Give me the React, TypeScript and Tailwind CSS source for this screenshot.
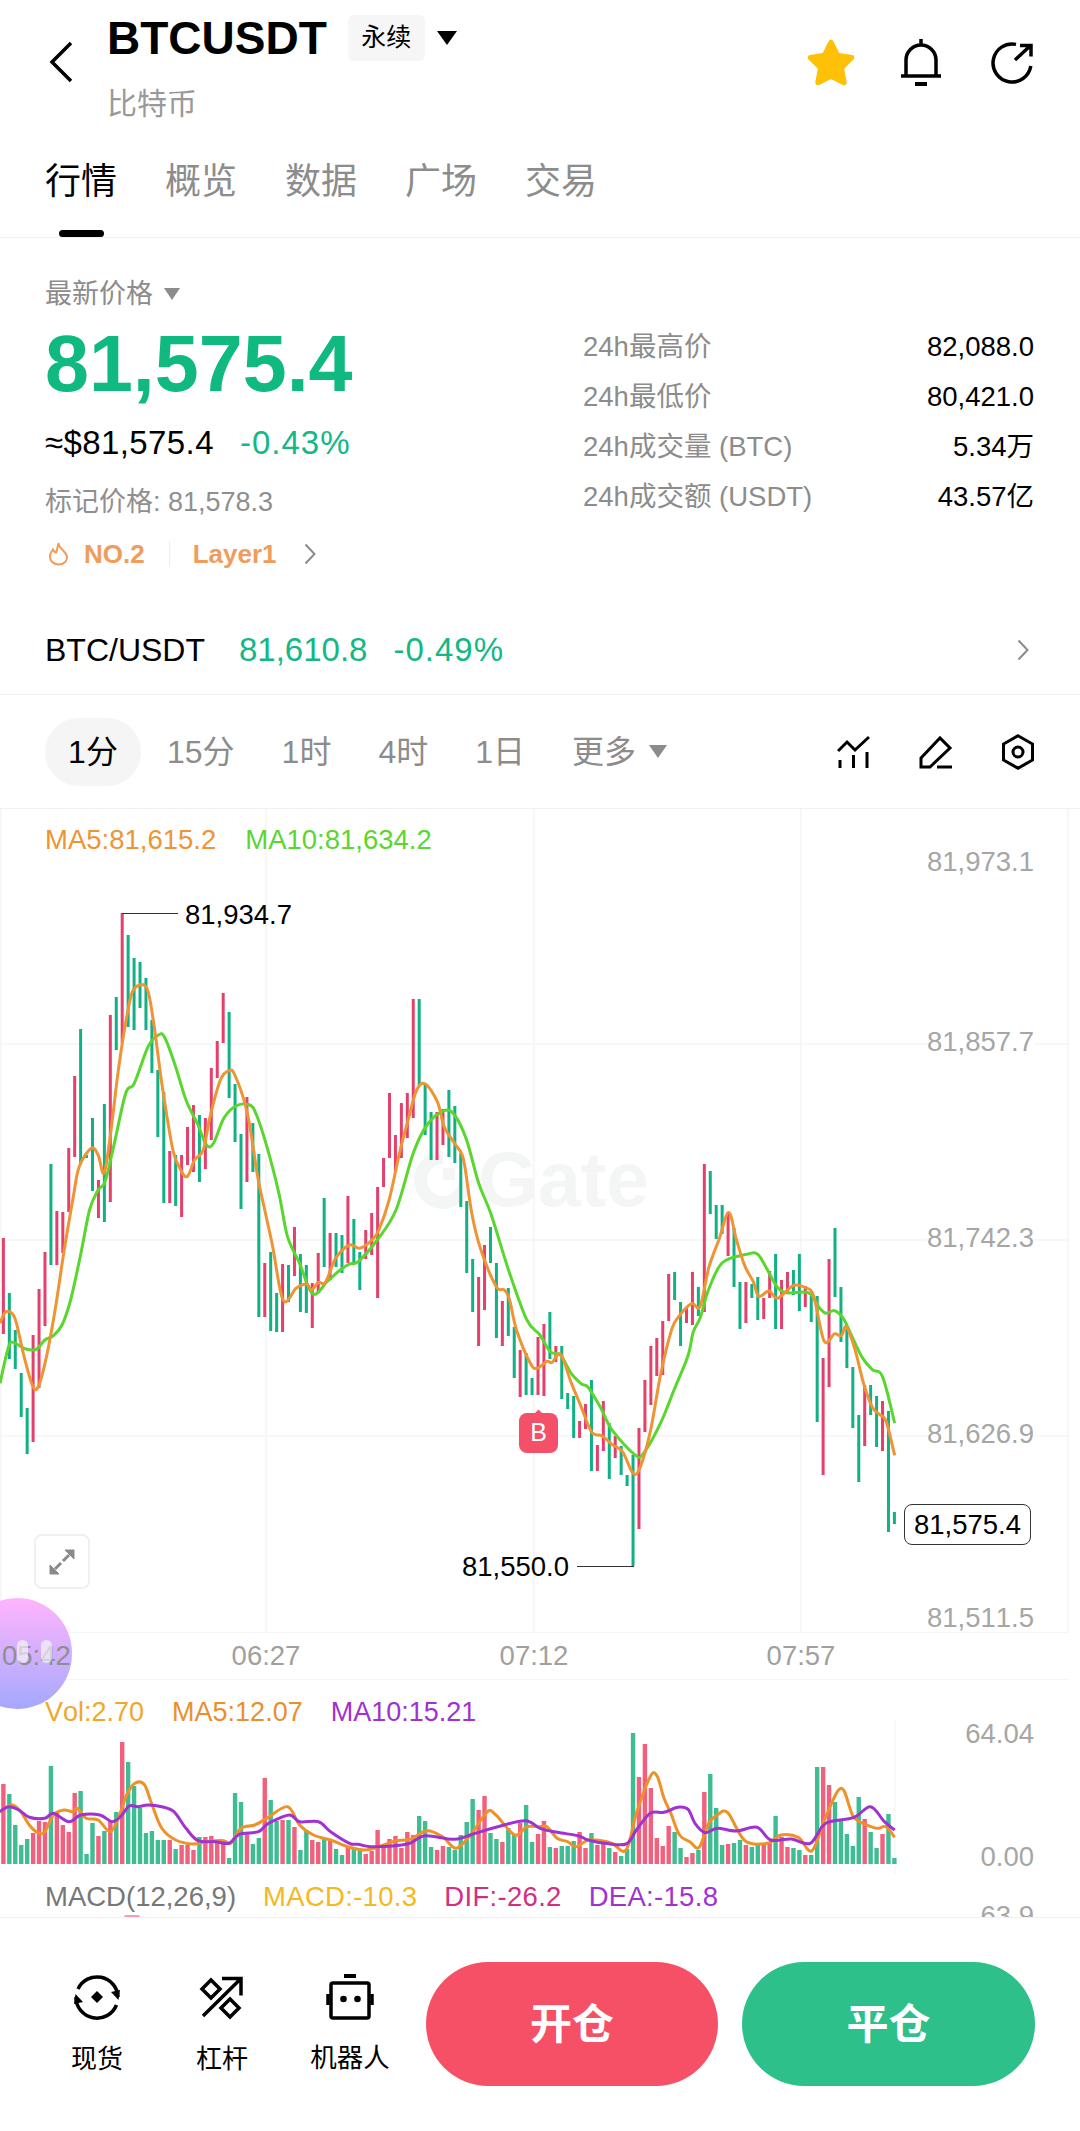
import React from 'react';

type Pt = [number, number];
const RED = '#e4406c';
const GREEN = '#12b085';
const VOL_RED = '#f1607c';
const VOL_GREEN = '#3fbd92';

// candles: top, bottom, colour. pitch is 5.94px from x=3.4
const candles: [number, number, 'r' | 'g'][] = [
  [1238, 1334, 'r'], [1293, 1359, 'g'], [1330, 1369, 'g'], [1373, 1417, 'g'], [1408, 1454, 'g'], [1335, 1442, 'r'], [1289, 1388, 'r'], [1252, 1326, 'r'], [1164, 1265, 'g'], [1211, 1265, 'r'],
  [1212, 1253, 'r'], [1148, 1212, 'r'], [1076, 1157, 'r'], [1029, 1164, 'g'], [1155, 1158, 'g'], [1118, 1191, 'g'], [1180, 1218, 'r'], [1104, 1222, 'g'], [1015, 1202, 'r'], [997, 1050, 'g'],
  [913, 1043, 'r'], [935, 1027, 'g'], [958, 1030, 'g'], [962, 1008, 'g'], [978, 1030, 'g'], [1020, 1073, 'g'], [1070, 1137, 'g'], [1092, 1203, 'g'], [1151, 1203, 'r'], [1155, 1206, 'g'],
  [1155, 1217, 'r'], [1127, 1165, 'r'], [1105, 1172, 'r'], [1115, 1182, 'g'], [1118, 1169, 'r'], [1068, 1140, 'r'], [1041, 1078, 'r'], [993, 1043, 'r'], [1012, 1098, 'g'], [1084, 1142, 'g'],
  [1134, 1209, 'g'], [1097, 1182, 'r'], [1123, 1172, 'g'], [1154, 1317, 'g'], [1263, 1317, 'r'], [1252, 1331, 'g'], [1293, 1332, 'g'], [1264, 1332, 'r'], [1265, 1302, 'g'], [1227, 1276, 'r'],
  [1254, 1312, 'g'], [1265, 1313, 'g'], [1283, 1328, 'r'], [1253, 1292, 'r'], [1198, 1267, 'g'], [1233, 1280, 'r'], [1233, 1267, 'g'], [1235, 1273, 'g'], [1196, 1263, 'r'], [1219, 1263, 'g'],
  [1252, 1290, 'g'], [1230, 1259, 'r'], [1213, 1255, 'r'], [1187, 1298, 'r'], [1158, 1187, 'r'], [1093, 1158, 'r'], [1135, 1172, 'r'], [1103, 1158, 'r'], [1093, 1138, 'r'], [999, 1118, 'r'],
  [999, 1085, 'g'], [1085, 1135, 'g'], [1112, 1160, 'g'], [1112, 1160, 'r'], [1109, 1145, 'r'], [1090, 1157, 'g'], [1106, 1163, 'g'], [1153, 1207, 'g'], [1201, 1273, 'g'], [1259, 1312, 'g'],
  [1277, 1346, 'r'], [1245, 1310, 'r'], [1227, 1263, 'g'], [1263, 1338, 'g'], [1301, 1346, 'r'], [1288, 1336, 'g'], [1327, 1378, 'g'], [1350, 1397, 'r'], [1353, 1395, 'g'], [1378, 1395, 'g'],
  [1337, 1395, 'r'], [1324, 1396, 'r'], [1312, 1359, 'g'], [1346, 1362, 'r'], [1346, 1399, 'g'], [1393, 1409, 'g'], [1396, 1438, 'g'], [1421, 1438, 'r'], [1404, 1429, 'r'], [1380, 1471, 'g'],
  [1445, 1471, 'r'], [1401, 1451, 'r'], [1423, 1479, 'g'], [1436, 1458, 'r'], [1446, 1475, 'g'], [1475, 1486, 'g'], [1455, 1566, 'g'], [1428, 1529, 'r'], [1380, 1432, 'r'], [1346, 1405, 'r'],
  [1338, 1376, 'r'], [1321, 1375, 'r'], [1274, 1321, 'r'], [1272, 1300, 'g'], [1302, 1346, 'g'], [1307, 1323, 'r'], [1272, 1325, 'r'], [1287, 1316, 'g'], [1164, 1312, 'r'], [1171, 1214, 'g'],
  [1205, 1239, 'g'], [1205, 1234, 'g'], [1212, 1256, 'r'], [1228, 1287, 'g'], [1282, 1329, 'g'], [1282, 1323, 'r'], [1284, 1298, 'g'], [1277, 1320, 'g'], [1298, 1319, 'r'], [1271, 1298, 'r'],
  [1254, 1329, 'g'], [1280, 1329, 'r'], [1272, 1294, 'r'], [1270, 1295, 'g'], [1254, 1311, 'g'], [1286, 1307, 'r'], [1296, 1322, 'g'], [1296, 1422, 'g'], [1358, 1475, 'r'], [1259, 1387, 'r'],
  [1228, 1297, 'g'], [1287, 1342, 'g'], [1329, 1368, 'g'], [1367, 1428, 'g'], [1415, 1482, 'g'], [1385, 1446, 'r'], [1385, 1415, 'g'], [1396, 1447, 'g'], [1401, 1451, 'r'], [1411, 1532, 'g'],
  [1512, 1524, 'g'],
];

const volumes = [
  80, 70, 39, 19, 25, 31, 43, 42, 98, 51, 39, 32, 71, 73, 10, 41, 28, 33, 43, 52, 122, 102, 78, 56, 31, 33, 24, 24, 24, 15,
  19, 19, 14, 27, 27, 28, 24, 21, 6, 71, 62, 31, 20, 26, 86, 64, 43, 44, 44, 37, 14, 34, 24, 22, 25, 24, 15, 9, 18, 16,
  14, 10, 13, 34, 19, 25, 28, 16, 32, 29, 48, 43, 17, 14, 18, 17, 14, 29, 42, 65, 54, 68, 31, 25, 22, 36, 29, 41, 59, 22, 30,
  43, 17, 16, 18, 18, 23, 32, 16, 31, 19, 21, 16, 12, 8, 15, 131, 87, 120, 76, 26, 18, 38, 32, 16, 7, 11, 14, 72, 90, 56,
  19, 20, 21, 24, 19, 17, 21, 19, 21, 48, 27, 17, 16, 14, 9, 9, 97, 97, 79, 62, 44, 30, 18, 67, 45, 32, 16, 30, 50, 6,
];

// traced line points, scaled from the trace down to page pixels
const trace = (pts: number[][], dx: number, oy: number, ky: number): Pt[] =>
  pts.map(([x, y]) => [dx + x / 2.904, oy + y / ky]);

const ma5: Pt[] = [
  ...trace([[0, 520], [15, 487], [35, 490], [48, 520], [70, 620], [95, 708], [112, 708], [135, 620], [160, 480], [185, 310]], 0, 1150, 3),
  ...trace([[213, 1190], [230, 1100], [265, 1045], [285, 1065], [302, 1120], [320, 1010], [345, 800], [370, 640], [388, 568], [425, 562], [445, 660], [470, 850], [500, 1040], [520, 1100], [543, 1130], [565, 1080], [590, 1050], [610, 950], [640, 840], [665, 812], [682, 825], [715, 925], [735, 1040]], 0, 800, 3),
  ...trace([[750, 90], [790, 280], [822, 450], [860, 415], [890, 402], [905, 420], [925, 397], [945, 397], [975, 325], [1015, 285], [1045, 295], [1080, 270], [1100, 240], [1130, 150]], 0, 1150, 3),
  ...trace([[1160, 1060], [1185, 960], [1210, 870], [1235, 852], [1270, 905], [1290, 980], [1320, 1030], [1340, 1060]], 0, 800, 3),
  ...trace([[1350, 50], [1370, 190], [1395, 295], [1440, 408], [1465, 420], [1480, 450], [1500, 540], [1540, 640], [1560, 655]], 0, 1150, 3),
  ...trace([[20, 732], [35, 735], [60, 712], [90, 790], [120, 860], [150, 930], [180, 940], [210, 965], [240, 985], [270, 1045], [290, 1030], [320, 930], [350, 770], [380, 650], [400, 610], [440, 570], [465, 578], [490, 470], [520, 390], [548, 315], [570, 390], [595, 465], [620, 510], [635, 550], [665, 535], [690, 555], [735, 520], [770, 525], [795, 550], [825, 675], [855, 655], [875, 660], [890, 635], [915, 700], [940, 795], [965, 860], [985, 880], [1005, 900], [1030, 995]], 540, 1100, 2.8),
];

const ma10: Pt[] = [
  ...trace([[0, 700], [25, 590], [40, 578], [75, 597], [105, 598], [130, 570], [155, 557], [180, 525], [205, 450], [235, 310], [260, 180]], 0, 1150, 3),
  ...trace([[285, 1170], [305, 1145], [330, 1040], [365, 880], [390, 850], [430, 740], [460, 705], [478, 712], [510, 800], [540, 900], [575, 975], [600, 1035], [620, 1030], [650, 955], [685, 918], [725, 915], [745, 945], [775, 1040]], 0, 800, 3),
  ...trace([[810, 130], [835, 260], [870, 340], [908, 432], [950, 395], [985, 362], [1015, 342], [1040, 335], [1095, 270], [1150, 180]], 0, 1150, 3),
  ...trace([[1200, 1060], [1240, 975], [1290, 932], [1320, 945], [1355, 1020]], 0, 800, 3),
  ...trace([[1390, 100], [1425, 190], [1480, 370], [1530, 510], [1568, 555]], 0, 1150, 3),
  ...trace([[30, 705], [60, 715], [90, 765], [120, 795], [140, 805], [175, 860], [210, 925], [275, 993], [300, 990], [350, 905], [390, 810], [430, 715], [445, 650], [465, 610], [490, 530], [530, 455], [600, 432], [632, 432], [660, 475], [690, 525], [720, 540], [780, 540], [810, 580], [830, 597], [855, 590], [880, 610], [905, 660], [935, 720], [965, 755], [995, 775], [1030, 905]], 540, 1100, 2.8),
];

const volMa5: Pt[] = [
  ...trace([[0, 935], [35, 915], [60, 935], [85, 975], [110, 998], [130, 995], [155, 945], [185, 930], [210, 935], [225, 925], [250, 955], [285, 960], [320, 995], [345, 950], [370, 880], [395, 848], [420, 855], [440, 910], [470, 985], [510, 1020], [560, 1032], [600, 1025], [650, 1022], [670, 1030], [700, 985], [740, 975], [775, 955], [835, 920], [870, 975], [910, 1005], [960, 1020], [1010, 1040], [1060, 1050], [1100, 1040], [1150, 1022], [1190, 1018], [1240, 992], [1285, 1010], [1325, 1045], [1370, 1000], [1415, 935], [1440, 945], [1495, 1005], [1530, 980]], 0, 1500, 3),
  ...trace([[0, 530], [20, 530], [50, 565], [80, 575], [105, 590], [140, 570], [180, 572], [210, 580], [250, 600], [280, 490], [320, 380], [340, 378], [360, 445], [380, 490], [405, 555], [435, 575], [462, 592], [490, 520], [515, 495], [545, 488], [595, 572], [660, 580], [700, 555], [750, 562], [790, 602], [830, 500], [875, 415], [910, 500], [950, 525], [980, 535], [1005, 530], [1030, 562]], 540, 1650, 3),
];

const volMa10: Pt[] = [
  ...trace([[0, 935], [25, 920], [55, 930], [85, 952], [130, 955], [155, 940], [200, 965], [235, 945], [290, 945], [325, 965], [350, 950], [375, 918], [400, 920], [430, 915], [470, 920], [505, 935], [540, 985], [575, 1022], [625, 1025], [665, 1030], [695, 1003], [750, 995], [780, 970], [840, 945], [870, 965], [925, 965], [960, 995], [1015, 1030], [1040, 1033], [1075, 1040], [1140, 1038], [1190, 1030], [1235, 1007], [1320, 1018], [1380, 1000], [1440, 982], [1525, 962]], 0, 1500, 3),
  ...trace([[0, 535], [50, 547], [110, 557], [140, 570], [190, 580], [250, 582], [280, 540], [320, 490], [360, 487], [400, 472], [430, 478], [450, 520], [480, 548], [515, 535], [570, 543], [630, 532], [670, 570], [730, 567], [785, 580], [830, 520], [910, 503], [960, 470], [1000, 515], [1030, 540]], 540, 1650, 3),
];

// catmull-rom through the points
function smooth(pts: Pt[]) {
  let d = `M${pts[0][0].toFixed(1)} ${pts[0][1].toFixed(1)}`;
  for (let i = 0; i < pts.length - 1; i++) {
    const p0 = pts[Math.max(i - 1, 0)];
    const p1 = pts[i];
    const p2 = pts[i + 1];
    const p3 = pts[Math.min(i + 2, pts.length - 1)];
    const c1 = [p1[0] + (p2[0] - p0[0]) / 6, p1[1] + (p2[1] - p0[1]) / 6];
    const c2 = [p2[0] - (p3[0] - p1[0]) / 6, p2[1] - (p3[1] - p1[1]) / 6];
    d += `C${c1[0].toFixed(1)} ${c1[1].toFixed(1)} ${c2[0].toFixed(1)} ${c2[1].toFixed(1)} ${p2[0].toFixed(1)} ${p2[1].toFixed(1)}`;
  }
  return d;
}

const candleX = (i: number) => 3.4 + 5.94 * i;

const priceAxis = [
  { label: '81,973.1', y: 862 },
  { label: '81,857.7', y: 1042 },
  { label: '81,742.3', y: 1238 },
  { label: '81,626.9', y: 1434 },
  { label: '81,511.5', y: 1618 },
];

const stats = [
  ['24h最高价', '82,088.0'],
  ['24h最低价', '80,421.0'],
  ['24h成交量 (BTC)', '5.34万'],
  ['24h成交额 (USDT)', '43.57亿'],
];

function MainChart() {
  return (
    <svg className="absolute inset-0 h-full w-full" viewBox="0 809 1080 823">
      {[1044, 1240, 1436].map((y) => (
        <line key={y} x1="0" x2="1068" y1={y} y2={y} stroke="#f5f5f5" strokeWidth="1.5" />
      ))}
      {[1, 266, 534, 801, 1068].map((x) => (
        <line key={x} x1={x} x2={x} y1="809" y2="1632" stroke="#f5f5f5" strokeWidth="1.5" />
      ))}
      {candles.map(([top, bottom, c], i) => (
        <rect key={i} x={candleX(i) - 1.5} y={top} width="3" height={bottom - top} fill={c === 'r' ? RED : GREEN} />
      ))}
      <path d={smooth(ma10)} fill="none" stroke="#5ad62f" strokeWidth="3" strokeLinejoin="round" />
      <path d={smooth(ma5)} fill="none" stroke="#ef9434" strokeWidth="3" strokeLinejoin="round" />
      <path d="M122 913.5H178" stroke="#333" strokeWidth="1.2" />
      <path d="M577 1566.5H634" stroke="#333" strokeWidth="1.2" />
    </svg>
  );
}

function VolumeChart() {
  return (
    <svg className="absolute inset-0 h-full w-full" viewBox="0 1680 1080 194">
      <line x1="895" x2="895" y1="1720" y2="1874" stroke="#f7f7f7" strokeWidth="1.5" />
      {volumes.map((h, i) => (
        <rect key={i} x={candleX(i) - 2.2} y={1864 - h} width="4.4" height={h} fill={candles[i][2] === 'r' ? VOL_RED : VOL_GREEN} />
      ))}
      <path d={smooth(volMa5)} fill="none" stroke="#ee9228" strokeWidth="3" strokeLinejoin="round" />
      <path d={smooth(volMa10)} fill="none" stroke="#a132d2" strokeWidth="3" strokeLinejoin="round" />
    </svg>
  );
}

const ChartIcon = () => (
  <svg width="33" height="33" viewBox="0 0 33 33" fill="none" stroke="#000" strokeWidth="3">
    <path d="M1 16 10 7l8 8L32 2" />
    <path d="M3 25v8M16.500 20v13M30 17v16" />
  </svg>
);

const PenIcon = () => (
  <svg width="34" height="34" viewBox="0 0 34 34" fill="none" stroke="#000" strokeWidth="3">
    <path d="M2 23 21 3l10 10L11 32H2z" />
    <path d="M18 32h15" />
  </svg>
);

const HexIcon = () => (
  <svg width="32" height="36" viewBox="0 0 32 36" fill="none" stroke="#000" strokeWidth="3">
    <path d="M16 1.800 30.500 10v16L16 34.200 1.500 26V10z" />
    <circle cx="16" cy="18" r="5" />
  </svg>
);

const Triangle = ({ className }: { className: string }) => (
  <span className={`border-x-transparent border-b-0 ${className}`} />
);

const Chevron = ({ color }: { color: string }) => (
  <svg width="12" height="22" viewBox="0 0 12 22" fill="none" stroke={color} strokeWidth="2">
    <path d="M1.500 1.500 10.500 11 1.500 20.500" />
  </svg>
);

function App() {
  return (
    <div className="relative flex h-[2131px] w-[1080px] flex-col overflow-hidden bg-white text-black [font-family:'Liberation_Sans','Noto_Sans_CJK_SC',sans-serif] [font-kerning:none]">
      {/* header */}
      <div className="flex h-[118px] shrink-0">
        <svg className="ml-[48px] mt-[41px]" width="26" height="42" viewBox="0 0 26 42" fill="none" stroke="#000" strokeWidth="3.5">
          <path d="M23 2 4 21l19 19" />
        </svg>
        <div className="ml-[33px] pt-[11px]">
          <div className="flex h-[54px] items-center">
            <span className="text-[46px] font-bold leading-none">BTCUSDT</span>
            <span className="ml-[21px] flex h-[46px] w-[77px] items-center justify-center rounded-md bg-[#f6f6f6] text-[25px]">永续</span>
            <Triangle className="ml-[12px] h-0 w-0 border-x-[10px] border-t-[14px] border-t-black" />
          </div>
          <div className="mt-[18px] text-[30px] leading-[42px] text-[#999]">比特币</div>
        </div>
        <div className="ml-auto mr-[46px] mt-[38px] flex gap-[45px]">
          <svg className="-mr-[3px]" width="52" height="50" viewBox="0 0 48 46" fill="#ffc107" stroke="#ffc107" strokeWidth="5" strokeLinejoin="round">
            <path d="M24 4 30 16 43 18 33.500 27.500 36 41 24 35 12 41 14.500 27.500 5 18 18 16z" />
          </svg>
          <svg width="44" height="50" viewBox="0 0 44 50" fill="none" stroke="#000" strokeWidth="3.500">
            <path d="M22 1v6M7 37V22a15 15 0 0 1 30 0v15M2 38h40" />
            <path d="M16 46h12" strokeWidth="4" />
          </svg>
          <svg className="ml-[2px] mt-[3px]" width="44" height="44" viewBox="0 0 44 44" fill="none" stroke="#000" strokeWidth="3.500">
            <path d="M26 3.400A19 19 0 1 0 40.800 25" />
            <path d="M25 19 40 5M30 4.500h11v11" />
          </svg>
        </div>
      </div>

      {/* tabs */}
      <div className="flex h-[120px] shrink-0 gap-[48px] border-b border-[#f0f0f0] pl-[45px] pt-[39px] text-[36px] leading-[50px] text-[#8c8c8c]">
        <div className="text-black">
          行情
          <div className="mx-auto mt-[23px] h-[7px] w-[45px] rounded-full bg-black" />
        </div>
        <div>概览</div>
        <div>数据</div>
        <div>广场</div>
        <div>交易</div>
      </div>

      {/* price block */}
      <div className="flex h-[367px] shrink-0 justify-between pl-[45px] pr-[46px]">
        <div className="pt-[38px]">
          <div className="flex h-[36px] items-center text-[27px] text-[#8c8c8c]">
            最新价格
            <Triangle className="ml-[11px] h-0 w-0 border-x-[8px] border-t-[12px] border-t-[#8c8c8c]" />
          </div>
          <div className="mt-[12px] h-[80px] text-[79px] font-bold leading-[80px] text-[#0fb97f]">81,575.4</div>
          <div className="mt-[19px] flex h-[40px] items-center gap-[26px] text-[33px]">
            <span className="tracking-[0.4px]">≈$81,575.4</span>
            <span className="tracking-[1px] text-[#12b885]">-0.43%</span>
          </div>
          <div className="mt-[21px] h-[36px] text-[27px] leading-[36px] text-[#8f8f8f]">标记价格: 81,578.3</div>
          <div className="mt-[16px] flex h-[36px] items-center text-[26px] font-medium text-[#f09c5c]">
            <svg className="ml-[3px]" width="21" height="24" viewBox="0 0 21 24" fill="none" stroke="#f09c5c" strokeWidth="2">
              <path d="M10.500 1.500C11 6 16 8 18.500 13c2 6-3 9.500-8 9.500s-9-3.500-8.500-9c.3-3 2-4 3-6 1 2 2 3 3 3 1.500-3 1.500-6 2.500-9.500z" />
            </svg>
            <span className="ml-[15px] font-bold">NO.2</span>
            <span className="ml-[24px] h-[26px] w-px bg-[#ececec]" />
            <span className="ml-[23px] font-bold">Layer1</span>
            <span className="ml-[27px]">
              <Chevron color="#8a8a8a" />
            </span>
          </div>
        </div>
        <div className="w-[451px] pt-[84px] text-[27.500px]">
          {stats.map(([label, value]) => (
            <div key={label} className="flex h-[50px] items-center justify-between">
              <span className="text-[#8c8c8c]">{label}</span>
              <span>{value}</span>
            </div>
          ))}
        </div>
      </div>

      {/* spot row */}
      <div className="flex h-[90px] shrink-0 items-center gap-[34px] border-b border-[#f0f0f0] pl-[45px] pr-[46px] text-[32px]">
        <span>BTC/USDT</span>
        <div className="flex gap-[26px] text-[33px] text-[#12b885]">
          <span>81,610.8</span>
          <span className="tracking-[1px]">-0.49%</span>
        </div>
        <span className="ml-auto mr-[5px]">
          <Chevron color="#8a8a8a" />
        </span>
      </div>

      {/* timeframes */}
      <div className="flex h-[114px] shrink-0 items-center border-b border-[#f0f0f0] pl-[45px] pr-[46px] text-[32px] text-[#8c8c8c]">
        <div className="flex h-[68px] w-[96px] items-center justify-center rounded-full bg-[#f5f5f5] text-black">1分</div>
        <div className="ml-[26px] flex items-center gap-[47px]">
          <span>15分</span>
          <span>1时</span>
          <span>4时</span>
          <span>1日</span>
          <span className="flex items-center">
            更多
            <Triangle className="ml-[13px] h-0 w-0 border-x-[9px] border-t-[13px] border-t-[#8c8c8c]" />
          </span>
        </div>
        <div className="ml-auto flex items-center gap-[49px] text-black">
          <ChartIcon />
          <PenIcon />
          <HexIcon />
        </div>
      </div>

      {/* k line */}
      <div className="relative h-[823px] shrink-0">
        <div className="absolute left-[414px] top-[332px] flex items-center gap-[6px] text-[#f4f6f6]">
          <svg width="58" height="58" viewBox="0 0 58 58" fill="#f4f6f6">
            <path d="M29 0v13a16 16 0 1 0 16 16h13A29 29 0 1 1 29 0z" />
            <rect x="29" y="17" width="12" height="12" />
          </svg>
          <span className="text-[77px] font-bold leading-none">Gate</span>
        </div>
        <MainChart />
        <div className="absolute left-[45px] top-[13px] flex gap-[29px] text-[27.500px] leading-[36px]">
          <span className="text-[#ef9434]">MA5:81,615.2</span>
          <span className="text-[#5ad62f]">MA10:81,634.2</span>
        </div>
        {priceAxis.map((t) => (
          <span key={t.label} className="absolute right-[46px] -translate-y-1/2 bg-white text-[27.500px] leading-[34px] text-[#a6a6a6]" style={{ top: t.y - 809 }}>
            {t.label}
          </span>
        ))}
        <span className="absolute left-[185px] top-[88px] text-[27.500px] leading-[36px]">81,934.7</span>
        <span className="absolute left-[462px] top-[740px] text-[27.500px] leading-[36px]">81,550.0</span>
        <div className="absolute left-[519px] top-[604px] flex h-[40px] w-[39px] items-center justify-center rounded-lg bg-[#f4506a] text-[25px] text-white">
          <span className="absolute -top-[2px] left-[16px] h-[7px] w-[7px] rotate-45 bg-[#f4506a]" />
          B
        </div>
        <div className="absolute left-[904px] top-[695px] flex h-[41px] w-[127px] items-center justify-center rounded-lg border border-[#333] bg-white text-[27.500px]">81,575.4</div>
        <div className="absolute left-[34px] top-[725px] flex h-[55px] w-[56px] items-center justify-center rounded-lg border-2 border-[#f0f0f0]">
          <svg width="28" height="28" viewBox="0 0 28 28" fill="#8a8a8a" stroke="#8a8a8a" strokeWidth="3">
            <path d="M17 2h9v9zM2 17v9h9z" strokeWidth="1" />
            <path d="M21 7l-6 6M7 21l6-6" />
          </svg>
        </div>
      </div>

      {/* time axis */}
      <div className="relative mr-[12px] h-[48px] shrink-0 border-y border-[#f5f5f5] text-[27.500px] leading-[46px] text-[#a0a0a0]">
        <span className="absolute left-[2px] z-20 text-[#8f8f8f]">05:42</span>
        <span className="absolute left-[266px] -translate-x-1/2">06:27</span>
        <span className="absolute left-[534px] -translate-x-1/2">07:12</span>
        <span className="absolute left-[801px] -translate-x-1/2">07:57</span>
      </div>

      {/* volume */}
      <div className="relative h-[194px] shrink-0">
        <VolumeChart />
        <div className="absolute left-[45px] top-[14px] flex gap-[28px] text-[27px] leading-[36px]">
          <span className="text-[#f0a82c]">Vol:2.70</span>
          <span className="text-[#e8902e]">MA5:12.07</span>
          <span className="text-[#a032d0]">MA10:15.21</span>
        </div>
        <span className="absolute right-[46px] top-[37px] text-[27.500px] leading-[34px] text-[#a6a6a6]">64.04</span>
        <span className="absolute right-[46px] top-[160px] text-[27.500px] leading-[34px] text-[#a6a6a6]">0.00</span>
      </div>

      {/* macd */}
      <div className="relative flex h-[43px] shrink-0 gap-[27px] overflow-hidden pl-[45px] pt-[6px] text-[27.500px] leading-[34px]">
        <span className="text-[#777]">MACD(12,26,9)</span>
        <span className="tracking-[0.3px] text-[#f5b820]">MACD:-10.3</span>
        <span className="tracking-[0.3px] text-[#d0307f]">DIF:-26.2</span>
        <span className="tracking-[0.3px] text-[#a032d0]">DEA:-15.8</span>
        <span className="absolute right-[46px] top-[25px] leading-[34px] text-[#a6a6a6]">63.9</span>
        <span className="absolute bottom-0 left-[124px] h-[2px] w-[16px] rounded-t-full bg-[#f1a0b4]" />
      </div>

      {/* bottom bar */}
      <div className="flex grow border-t border-[#f0f0f0] bg-white pl-[50px] pr-[45px] pt-[44px]">
        <div className="flex w-[376px] text-[26px]">
          <div className="flex w-[94px] flex-col items-center">
            <svg className="mt-[11px]" width="48" height="48" viewBox="0 0 48 48" fill="none" stroke="#000" strokeWidth="3.500">
              <path d="M5 16A21 21 0 0 1 45 24M43.500 32A21 21 0 0 1 3 24" />
              <path d="M45.500 27 38 19 47 17zM2.500 21 10 29 1 31z" fill="#000" stroke="none" />
              <path d="M24 18l6 6-6 6-6-6z" fill="#000" stroke="none" />
            </svg>
            <span className="mt-[20px] leading-[36px]">现货</span>
          </div>
          <div className="ml-[31px] flex w-[94px] flex-col items-center">
            <svg className="mt-[13px]" width="46" height="46" viewBox="0 0 46 46" fill="none" stroke="#000" strokeWidth="3.500">
              <path d="M4 41 42 3.500M23 3.500h19v17" />
              <path d="M12 5l9 9-9 9-9-9zM31 24l9 9-9 9-9-9z" />
            </svg>
            <span className="mt-[20px] leading-[36px]">杠杆</span>
          </div>
          <div className="ml-[41px] flex w-[80px] flex-col items-center">
            <svg className="mt-[11px]" width="48" height="48" viewBox="0 0 48 48" fill="none" stroke="#000" strokeWidth="3.500">
              <path d="M18 3h12" strokeWidth="4" />
              <rect x="5" y="10" width="38" height="35" rx="2" />
              <path d="M2 21v11M46 21v11" />
              <circle cx="17.500" cy="26" r="3.300" fill="#000" stroke="none" />
              <circle cx="31.500" cy="26" r="3.300" fill="#000" stroke="none" />
            </svg>
            <span className="mt-[19px] whitespace-nowrap text-[26.500px] leading-[36px]">机器人</span>
          </div>
        </div>
        <div className="ml-auto flex gap-[24px] text-[42px] font-bold text-white">
          <div className="flex h-[124px] w-[292px] items-center justify-center rounded-full bg-[#f65066]">开仓</div>
          <div className="flex h-[124px] w-[293px] items-center justify-center rounded-full bg-[#2dc08a]">平仓</div>
        </div>
      </div>

      {/* floating bubble */}
      <div className="absolute -left-[38px] top-[1598px] z-10 h-[111px] w-[110px] rounded-full bg-gradient-to-b from-[#ffb4fd] to-[#a4a8ff]" />
      <div className="absolute left-[17px] top-[1640px] z-30 flex gap-[13px] opacity-60">
        <span className="h-[23px] w-[11px] rounded-full bg-white" />
        <span className="h-[23px] w-[11px] rounded-full bg-white" />
      </div>
    </div>
  );
}

export default App;
